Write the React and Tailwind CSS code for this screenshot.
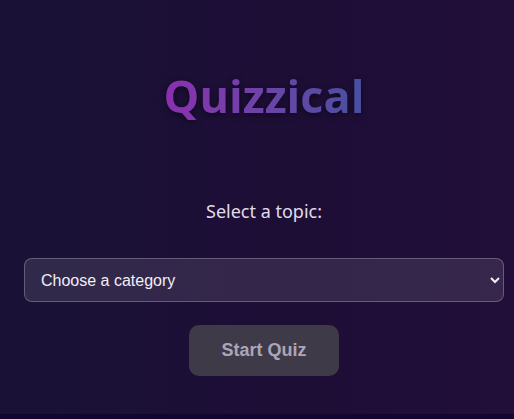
export default function App() {
  return (
    <div className="flex h-[419px] flex-col bg-[#12052e]">
      <div className="flex h-[414px] flex-col bg-gradient-to-r from-[#191236] via-[#1d0e36] to-[#210e39]">
        <main className="ml-6 mr-[10px] flex flex-col items-center">
          <h1 className="mt-[68px] bg-gradient-to-r from-[#8a2fb0] to-[#4650a0] bg-clip-text font-['Open_Sans','Noto_Sans',sans-serif] text-[45px] font-bold leading-[56px] text-transparent drop-shadow-[0_2px_3px_rgba(0,0,0,0.5)]">
            Quizzical
          </h1>
          <p className="mt-[75px] font-['Noto_Sans','Open_Sans',sans-serif] text-[18px] leading-[24px] text-[#e2dbea]">
            Select a topic:
          </p>
          <select
            defaultValue=""
            className="mt-[35px] h-[44px] w-full rounded-lg border border-white/25 bg-white/10 pl-3 pr-2 font-['Liberation_Sans',Arial,sans-serif] text-[16px] text-[#f2eef6] outline-none"
          >
            <option value="" className="bg-[#2a1f45]">Choose a category</option>
          </select>
          <button className="mt-[23px] h-[51px] w-[150px] rounded-[10px] bg-[#3f3a48] font-['Liberation_Sans',Arial,sans-serif] text-[18px] font-bold text-[#aca5b9]">
            Start Quiz
          </button>
        </main>
      </div>
    </div>
  );
}
